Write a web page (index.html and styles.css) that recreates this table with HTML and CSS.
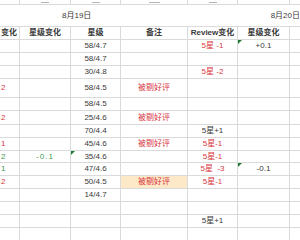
FILE: index.html
```html
<!DOCTYPE html>
<html lang="zh">
<head>
  <meta charset="UTF-8">
  <title>评分统计</title>
  <link rel="stylesheet" href="styles.css">
</head>
<body>

  <div class="sheet">
    <!-- clipped row above: only the glyph feet show -->
    <div class="c top"></div>
    <div class="c top"><i class="frag"></i></div>
    <div class="c top"><i class="frag"></i></div>
    <div class="c top"><i class="frag long"></i></div>
    <div class="c top"><i class="frag"></i></div>
    <div class="c top"></div>
    <div class="c top"></div>

    <!-- date row (merged) -->
    <div class="c date">
      <span class="day">8月19日</span>
      <span>8月20日</span>
    </div>

    <!-- headers -->
    <div class="c hd left">变化</div>
    <div class="c hd">星级变化</div>
    <div class="c hd">星级</div>
    <div class="c hd">备注</div>
    <div class="c hd">Review变化</div>
    <div class="c hd">星级变化</div>
    <div class="c"></div>

    <div class="c"></div>
    <div class="c"></div>
    <div class="c">58/4.7</div>
    <div class="c"></div>
    <div class="c red">5星 -1</div>
    <div class="c mark">+0.1</div>
    <div class="c"></div>

    <div class="c"></div>
    <div class="c"></div>
    <div class="c">58/4.7</div>
    <div class="c"></div>
    <div class="c"></div>
    <div class="c"></div>
    <div class="c"></div>

    <div class="c"></div>
    <div class="c"></div>
    <div class="c">30/4.8</div>
    <div class="c"></div>
    <div class="c red">5星 -2</div>
    <div class="c"></div>
    <div class="c"></div>

    <div class="c left red">2</div>
    <div class="c"></div>
    <div class="c">58/4.5</div>
    <div class="c red">被剔好评</div>
    <div class="c"></div>
    <div class="c"></div>
    <div class="c"></div>

    <div class="c"></div>
    <div class="c"></div>
    <div class="c">58/4.5</div>
    <div class="c"></div>
    <div class="c"></div>
    <div class="c"></div>
    <div class="c"></div>

    <div class="c left red">2</div>
    <div class="c"></div>
    <div class="c">25/4.6</div>
    <div class="c red">被剔好评</div>
    <div class="c"></div>
    <div class="c"></div>
    <div class="c"></div>

    <div class="c"></div>
    <div class="c"></div>
    <div class="c">70/4.4</div>
    <div class="c"></div>
    <div class="c">5星+1</div>
    <div class="c"></div>
    <div class="c"></div>

    <div class="c left red">1</div>
    <div class="c"></div>
    <div class="c">45/4.6</div>
    <div class="c red">被剔好评</div>
    <div class="c red">5星-1</div>
    <div class="c"></div>
    <div class="c"></div>

    <div class="c left grn">2</div>
    <div class="c grn wide">-0.1</div>
    <div class="c mark">35/4.6</div>
    <div class="c"></div>
    <div class="c red">5星-1</div>
    <div class="c"></div>
    <div class="c"></div>

    <div class="c left grn">1</div>
    <div class="c"></div>
    <div class="c">47/4.6</div>
    <div class="c"></div>
    <div class="c red">5星 &nbsp;-3</div>
    <div class="c mark">-0.1</div>
    <div class="c"></div>

    <div class="c left red">2</div>
    <div class="c"></div>
    <div class="c">50/4.5</div>
    <div class="c red hl">被剔好评</div>
    <div class="c red">5星-1</div>
    <div class="c"></div>
    <div class="c"></div>

    <div class="c"></div>
    <div class="c"></div>
    <div class="c">14/4.7</div>
    <div class="c"></div>
    <div class="c"></div>
    <div class="c"></div>
    <div class="c"></div>

    <div class="c"></div>
    <div class="c"></div>
    <div class="c"></div>
    <div class="c"></div>
    <div class="c"></div>
    <div class="c"></div>
    <div class="c"></div>

    <div class="c"></div>
    <div class="c"></div>
    <div class="c"></div>
    <div class="c"></div>
    <div class="c">5星+1</div>
    <div class="c"></div>
    <div class="c"></div>

    <div class="c"></div>
    <div class="c"></div>
    <div class="c"></div>
    <div class="c"></div>
    <div class="c"></div>
    <div class="c"></div>
    <div class="c"></div>
  </div>

</body>
</html>
```

FILE: styles.css
```css
body {
  margin: 0;
  background: #fff;
  font-family: "Liberation Sans", "Noto Sans CJK SC", sans-serif;
  font-size: 8px;
  color: #3a3a3a;
}

.sheet {
  display: grid;
  grid-template-columns: 19px 50px 49px 66px 49px 51px 1fr;
  grid-template-rows: 4px 21px 12px 12px 12px 12px 18px 12px 13px 12px 12px 11px 12px 12px 12px 12px 12px 12px;
  gap: 1px;
  background: #dadada;
  height: 240px;
  overflow: hidden;
}

.c {
  background: #fff;
  display: flex;
  align-items: center;
  justify-content: center;
  white-space: nowrap;
  overflow: hidden;
  line-height: 1;
  position: relative;
}

.c.left {
  justify-content: flex-start;
  padding-left: 1px;
}

.top {
  align-items: flex-end;
  padding-bottom: 1px;
}

.frag {
  width: 8px;
  height: 1px;
  background: #b5b5b5;
}

.frag.long {
  width: 11px;
}

.date {
  grid-column: 1 / -1;
  justify-content: flex-start;
  padding-left: 62px;
}

.date .day {
  width: 220px;
}

.hd {
  font-weight: bold;
}

.red {
  color: #d9363e;
}

.grn {
  color: #3c9a50;
}

.wide {
  letter-spacing: 1px;
}

.hl {
  background: #fde9c8;
}

.mark::before {
  content: "";
  position: absolute;
  top: 0;
  left: 0;
  border-top: 4px solid #1e7a34;
  border-right: 4px solid transparent;
}
```
